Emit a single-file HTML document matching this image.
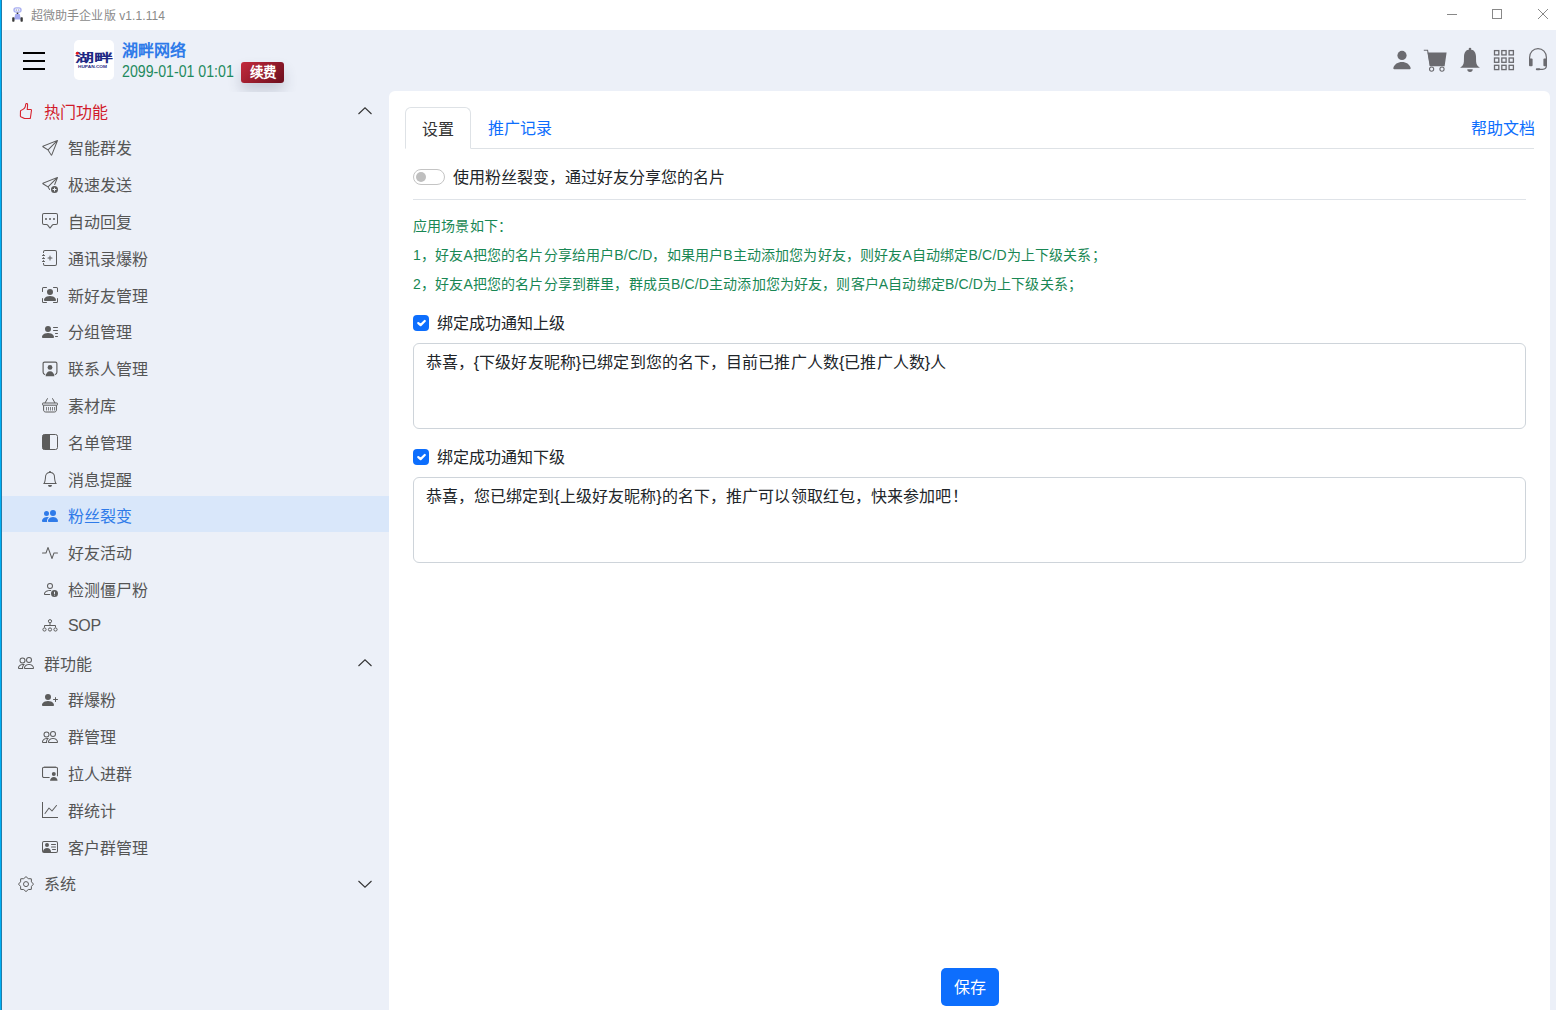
<!DOCTYPE html>
<html lang="zh-CN">
<head>
<meta charset="utf-8">
<style>
*{box-sizing:border-box;margin:0;padding:0}
html,body{width:1556px;height:1010px;overflow:hidden;background:#ecf0f8;font-family:"Liberation Sans",sans-serif;}
.abs{position:absolute}
#lb{position:absolute;left:0;top:0;width:3px;height:1010px;background:linear-gradient(90deg,#00b0f6 0,#00b0f6 1px,#217ca8 1px,#217ca8 2px,#f3f6fb 2px)}
#title{position:absolute;left:2px;top:0;width:1554px;height:30px;background:#fff}
#title .t{position:absolute;left:29px;top:1.5px;letter-spacing:.1px;line-height:29px;font-size:12px;color:#8a8a8a;white-space:nowrap}
#hdr{position:absolute;left:3px;top:30px;width:1553px;height:62px;background:#ecf0f8}
.ham{position:absolute;left:23px;width:22px;height:2px;background:#000}
#logo{position:absolute;left:74px;top:40px;width:40px;height:40px;background:#fff;border-radius:5px}
#name{position:absolute;left:122px;top:39px;font-size:16px;font-weight:bold;color:#2f7be9;line-height:24px;white-space:nowrap}
#date{position:absolute;left:122px;top:59.5px;font-size:16px;color:#1f8a5e;line-height:24px;white-space:nowrap;transform:scaleX(.885);transform-origin:0 0}
#badge{position:absolute;left:241px;top:62px;width:43px;height:21px;border-radius:3px;background:linear-gradient(135deg,#c42a3c,#6b0e1d);color:#fff;font-size:13.5px;font-weight:bold;line-height:20px;padding-top:1px;text-align:center;box-shadow:0 8px 14px rgba(50,60,90,.2)}
#side{position:absolute;left:2px;top:92px;width:387px;height:918px;background:#ecf0f8}
.mi{position:absolute;left:0;width:387px;height:36.8px;line-height:36.8px;font-size:16px;color:#555;white-space:nowrap}
.mi .tx{position:absolute;left:66px;top:2.5px}
.mi.h .tx{left:42px}
.mi svg{position:absolute}
.mi.sel{color:#2f7be9}
.selband{position:absolute;left:0;top:404px;width:387px;height:36px;background:#d9e7fa}
.mi.hot{color:#d11a2a}
#card{position:absolute;left:389px;top:91px;width:1161px;height:940px;background:#fff;border-radius:6px}
.tab{position:absolute;left:16px;top:16px;width:66px;height:42px;border:1px solid #dee2e6;border-bottom-color:#fff;border-radius:6px 6px 0 0;font-size:16px;line-height:24px;padding:9.5px 16px 6px;color:#333;background:#fff;z-index:2;white-space:nowrap}
.tabline{position:absolute;left:16px;top:57px;width:1129px;height:1px;background:#dee2e6}
.link{font-size:16px;line-height:24px;color:#0d6efd;white-space:nowrap}
.txt{font-size:16px;line-height:24px;color:#212529;white-space:nowrap}
.sw{position:absolute;left:24px;top:78px;width:32px;height:16px;border:1px solid #c4c4c4;border-radius:8px;background:#fff}
.sw span{position:absolute;left:2px;top:2px;width:10px;height:10px;border-radius:50%;background:#bfbfbf}
.hr{position:absolute;left:24px;width:1113px;height:1px;background:#dfe3e8}
.green{left:24px;font-size:14px;line-height:21px;color:#198754;white-space:nowrap;letter-spacing:.15px}
.cb{position:absolute;left:24px;width:16px;height:16px;border-radius:4px;background:#0d6efd}
.cb svg{position:absolute;left:0;top:0}
.ta{position:absolute;left:24px;width:1113px;height:86px;border:1px solid #ced4da;border-radius:6px;padding:6.8px 11.5px;font-size:16px;line-height:24px;color:#212529;white-space:nowrap;letter-spacing:.1px}
.btn{position:absolute;left:552px;top:877px;width:58px;height:38px;border-radius:5px;background:#0d6efd;color:#fff;font-size:16px;line-height:38px;padding-top:1px;text-align:center}
</style>
</head>
<body>
<div id="lb"></div>
<div id="title">
  <svg class="abs" style="left:10px;top:6.5px" width="11" height="15" viewBox="0 0 11 15">
    <rect x="1.3" y="0.2" width="8.4" height="5.6" rx="2.8" fill="#a9aff0"/>
    <rect x="2.8" y="1.6" width="5.4" height="2.8" rx="1.2" fill="#eceeff"/>
    <circle cx="4.3" cy="3" r=".6" fill="#777"/><circle cx="6.7" cy="3" r=".6" fill="#777"/>
    <rect x="4.7" y="5.6" width="1.6" height="1.6" fill="#333"/>
    <path d="M3.3 7 H7.7 L9 12.6 H2 Z" fill="#a3a9ef"/>
    <rect x="0.2" y="10.2" width="2.3" height="4.6" rx=".7" fill="#3a3a3a"/>
    <rect x="8.5" y="10.2" width="2.3" height="4.6" rx=".7" fill="#3a3a3a"/>
  </svg>
  <div class="t">超微助手企业版 v1.1.114</div>
  <svg class="abs" style="left:1445px;top:14px" width="10" height="2"><rect width="10" height="1" y="0" fill="#888"/></svg>
  <svg class="abs" style="left:1490px;top:9px" width="11" height="11"><rect x="0.5" y="0.5" width="9" height="9" fill="none" stroke="#888" stroke-width="1"/></svg>
  <svg class="abs" style="left:1536px;top:9px" width="11" height="11"><path d="M0 0 L10 10 M10 0 L0 10" stroke="#888" stroke-width="1"/></svg>
</div>
<div id="hdr"></div>
<div class="ham" style="top:52px"></div>
<div class="ham" style="top:60px"></div>
<div class="ham" style="top:68px"></div>
<svg class="abs" style="left:1380px;top:40px" width="176" height="40" viewBox="0 0 176 40">
 <g fill="#6b6b70">
  <circle cx="22" cy="15.4" r="4.6"/>
  <path d="M14.3 29.2 C13.5 29.2 13.1 28.6 13.4 27.8 C14.4 24.3 17.8 22 22 22 C26.2 22 29.6 24.3 30.6 27.8 C30.9 28.6 30.5 29.2 29.7 29.2 Z"/>
  <path d="M47.6 12.4 H66.6 L64.6 26.2 H50 Z"/>
  <path d="M43.8 10.3 H47.6 L50.2 26" fill="none" stroke="#6b6b70" stroke-width="1.05"/>
  <circle cx="51.6" cy="29.1" r="2.1" fill="none" stroke="#6b6b70" stroke-width="1.1"/>
  <circle cx="62" cy="29.1" r="2.1" fill="none" stroke="#6b6b70" stroke-width="1.1"/>
  <circle cx="90" cy="9" r="1.3"/>
  <path d="M90 9.5 C86.1 9.5 84.1 12.3 84 16.5 L83.9 21.5 C83.8 24.5 82.4 26.3 80.1 27.7 H99.9 C97.6 26.3 96.2 24.5 96.1 21.5 L96 16.5 C95.9 12.3 93.9 9.5 90 9.5Z"/>
  <path d="M87.3 29.2 A2.7 2.7 0 0 0 92.7 29.2 Z"/>
 </g>
 <g fill="none" stroke="#6b6b70" stroke-width="1.3">
  <rect x="114.5" y="10.6" width="4.3" height="4.3"/><rect x="121.8" y="10.6" width="4.3" height="4.3"/><rect x="129.1" y="10.6" width="4.3" height="4.3"/>
  <rect x="114.5" y="18" width="4.3" height="4.3"/><rect x="121.8" y="18" width="4.3" height="4.3"/><rect x="129.1" y="18" width="4.3" height="4.3"/>
  <rect x="114.5" y="25.3" width="4.3" height="4.3"/><rect x="121.8" y="25.3" width="4.3" height="4.3"/><rect x="129.1" y="25.3" width="4.3" height="4.3"/>
  <path d="M149.6 24 V17.5 C149.6 12.5 153.2 8.6 158 8.6 C162.8 8.6 166.4 12.5 166.4 17.5 V25.5 C166.4 27.8 165 29.3 162.5 29.3 H158.5" stroke-width="1.2"/>
 </g>
 <g fill="#6b6b70">
  <rect x="149" y="18.6" width="3.6" height="7.6" rx="1"/>
  <rect x="163.4" y="18.6" width="3.6" height="7.6" rx="1"/>
  <rect x="155.8" y="28.3" width="4.4" height="2" rx="1"/>
 </g>
</svg>
<div id="logo"><svg width="40" height="40" viewBox="0 0 40 40">
 <text x="1.5" y="23.9" font-family="Liberation Sans,sans-serif" font-weight="bold" font-size="17" fill="#1f2a85" textLength="37" lengthAdjust="spacingAndGlyphs" transform="translate(0,6) scale(1,0.67)">湖畔</text>
 <text x="4" y="28.4" font-family="Liberation Sans,sans-serif" font-weight="bold" font-size="4.3" fill="#1f2a85" textLength="29" lengthAdjust="spacingAndGlyphs">HUPAN.COM</text>
 <circle cx="3.3" cy="13.2" r="1.5" fill="#e81818"/>
</svg></div>
<div id="name">湖畔网络</div>
<div id="date">2099-01-01 01:01</div>
<div id="badge">续费</div>

<div id="side">
<div class="selband"></div>
<div class="mi h hot" style="top:0.0px"><svg style="left:16px;top:11px" width="16" height="16" viewBox="0 0 16 16"><path d="M8.6 0.5 C9.3 0.5 9.6 1 9.6 1.7 L9.3 6.4 L13 6.5 C13.4 6.6 13.5 6.9 13.5 7.3 L12.4 15 C12.3 15.4 12 15.6 11.6 15.6 L6.6 15.6 L2.8 13.8 C2.5 13.6 2.4 13.4 2.4 13 L2.5 8 C2.5 7.6 2.8 7.3 3.3 7.2 C5.2 6.6 7.3 5 7.6 2.2 L7.7 1.3 C7.8 0.8 8.1 0.5 8.6 0.5 Z" fill="none" stroke="#d8242f" stroke-width="1.1"/></svg><span class="tx">热门功能</span></div>
<div class="mi" style="top:36.8px"><svg style="left:40px;top:11px" width="16" height="16" viewBox="0 0 16 16"><path d="M15.854.146a.5.5 0 0 1 .11.54l-5.819 14.547a.75.75 0 0 1-1.329.124l-3.178-4.995L.643 7.184a.75.75 0 0 1 .124-1.33L15.314.037a.5.5 0 0 1 .54.11ZM6.636 10.07l2.761 4.338L14.13 2.576 6.636 10.07Zm6.787-8.201L1.591 6.602l4.339 2.76 7.494-7.493Z" fill="#5c5c5c"/></svg><span class="tx">智能群发</span></div>
<div class="mi" style="top:73.6px"><svg style="left:40px;top:11px" width="16" height="16" viewBox="0 0 16 16"><path d="M15.964.686a.5.5 0 0 0-.65-.65L.767 5.855a.75.75 0 0 0-.124 1.329l4.995 3.178 1.531 2.406a.5.5 0 0 0 .844-.536L6.637 10.07l7.494-7.494-1.895 4.738a.5.5 0 1 0 .928.372l2.8-7Zm-2.54 1.183L5.93 9.363 1.591 6.602l11.833-4.733Z" fill="#5c5c5c"/><path d="M16 12.5a3.5 3.5 0 1 1-7 0 3.5 3.5 0 0 1 7 0Zm-3.5-2a.5.5 0 0 0-.5.5v1h-1a.5.5 0 0 0 0 1h1v1a.5.5 0 0 0 1 0v-1h1a.5.5 0 0 0 0-1h-1v-1a.5.5 0 0 0-.5-.5Z" fill="#5c5c5c"/></svg><span class="tx">极速发送</span></div>
<div class="mi" style="top:110.4px"><svg style="left:40px;top:11px" width="16" height="16" viewBox="0 0 16 16"><path d="M14 1a1 1 0 0 1 1 1v8a1 1 0 0 1-1 1h-2.5a2 2 0 0 0-1.6.8L8 14.333 6.1 11.8a2 2 0 0 0-1.6-.8H2a1 1 0 0 1-1-1V2a1 1 0 0 1 1-1h12zM2 0a2 2 0 0 0-2 2v8a2 2 0 0 0 2 2h2.5a1 1 0 0 1 .8.4l1.9 2.533a1 1 0 0 0 1.6 0l1.9-2.533a1 1 0 0 1 .8-.4H14a2 2 0 0 0 2-2V2a2 2 0 0 0-2-2H2z" fill="#5c5c5c"/><path d="M5 6a1 1 0 1 1-2 0 1 1 0 0 1 2 0zm4 0a1 1 0 1 1-2 0 1 1 0 0 1 2 0zm4 0a1 1 0 1 1-2 0 1 1 0 0 1 2 0z" fill="#5c5c5c"/></svg><span class="tx">自动回复</span></div>
<div class="mi" style="top:147.2px"><svg style="left:40px;top:11px" width="16" height="16" viewBox="0 0 16 16"><path d="M8 5.5a.5.5 0 0 1 .5.5v1.5H10a.5.5 0 0 1 0 1H8.5V10a.5.5 0 0 1-1 0V8.5H6a.5.5 0 0 1 0-1h1.5V6a.5.5 0 0 1 .5-.5z" fill="#5c5c5c"/><path d="M3 0h10a2 2 0 0 1 2 2v12a2 2 0 0 1-2 2H3a2 2 0 0 1-2-2v-1h1v1a1 1 0 0 0 1 1h10a1 1 0 0 0 1-1V2a1 1 0 0 0-1-1H3a1 1 0 0 0-1 1v1H1V2a2 2 0 0 1 2-2z" fill="#5c5c5c"/><path d="M1 5v-.5a.5.5 0 0 1 1 0V5h.5a.5.5 0 0 1 0 1h-2a.5.5 0 0 1 0-1H1zm0 3v-.5a.5.5 0 0 1 1 0V8h.5a.5.5 0 0 1 0 1h-2a.5.5 0 0 1 0-1H1zm0 3v-.5a.5.5 0 0 1 1 0v.5h.5a.5.5 0 0 1 0 1h-2a.5.5 0 0 1 0-1H1z" fill="#5c5c5c"/></svg><span class="tx">通讯录爆粉</span></div>
<div class="mi" style="top:184.0px"><svg style="left:40px;top:11px" width="16" height="16" viewBox="0 0 16 16"><path d="M1.5 1a.5.5 0 0 0-.5.5v3a.5.5 0 0 1-1 0v-3A1.5 1.5 0 0 1 1.5 0h3a.5.5 0 0 1 0 1h-3zM11 .5a.5.5 0 0 1 .5-.5h3A1.5 1.5 0 0 1 16 1.5v3a.5.5 0 0 1-1 0v-3a.5.5 0 0 0-.5-.5h-3a.5.5 0 0 1-.5-.5zM.5 11a.5.5 0 0 1 .5.5v3a.5.5 0 0 0 .5.5h3a.5.5 0 0 1 0 1h-3A1.5 1.5 0 0 1 0 14.5v-3a.5.5 0 0 1 .5-.5zm15 0a.5.5 0 0 1 .5.5v3a1.5 1.5 0 0 1-1.5 1.5h-3a.5.5 0 0 1 0-1h3a.5.5 0 0 0 .5-.5v-3a.5.5 0 0 1 .5-.5z" fill="#5c5c5c"/><path d="M3 14s-1 0-1-1 1-4 6-4 6 3 6 4-1 1-1 1H3zm8-9a3 3 0 1 1-6 0 3 3 0 0 1 6 0z" fill="#5c5c5c"/></svg><span class="tx">新好友管理</span></div>
<div class="mi" style="top:220.8px"><svg style="left:40px;top:11px" width="16" height="16" viewBox="0 0 16 16"><path d="M6 8a3 3 0 1 0 0-6 3 3 0 0 0 0 6zm-5 6s-1 0-1-1 1-4 6-4 6 3 6 4-1 1-1 1H1zM11 3.5a.5.5 0 0 1 .5-.5h4a.5.5 0 0 1 0 1h-4a.5.5 0 0 1-.5-.5zm.5 2.5a.5.5 0 0 0 0 1h4a.5.5 0 0 0 0-1h-4zm2 3a.5.5 0 0 0 0 1h2a.5.5 0 0 0 0-1h-2zm0 3a.5.5 0 0 0 0 1h2a.5.5 0 0 0 0-1h-2z" fill="#5c5c5c"/></svg><span class="tx">分组管理</span></div>
<div class="mi" style="top:257.6px"><svg style="left:40px;top:11px" width="16" height="16" viewBox="0 0 16 16"><path d="M3.2 13.6 C1.9 13.4 1.1 12.5 1.1 11.2 V2.6 C1.1 1.6 1.6 1.1 2.6 1.1 H13.4 C14.4 1.1 14.9 1.6 14.9 2.6 V11.2 C14.9 12.5 14.1 13.4 12.8 13.6" fill="none" stroke="#5c5c5c" stroke-width="1.15"/><circle cx="8" cy="6.4" r="2.4" fill="#5c5c5c"/><path d="M3.6 15.2 C3.8 12.2 5.5 10.2 8 10.2 C10.5 10.2 12.2 12.2 12.4 15.2 Z" fill="#5c5c5c"/></svg><span class="tx">联系人管理</span></div>
<div class="mi" style="top:294.4px"><svg style="left:40px;top:11px" width="16" height="16" viewBox="0 0 16 16"><path d="M5.6 1.3 L3 6 M10.4 1.3 L13 6" fill="none" stroke="#5c5c5c" stroke-width="1"/><rect x="0.5" y="6" width="15" height="2.2" rx=".6" fill="none" stroke="#5c5c5c" stroke-width="1"/><path d="M1.6 8.4 V13 C1.6 14.2 2.4 15 3.6 15 H12.4 C13.6 15 14.4 14.2 14.4 13 V8.4" fill="none" stroke="#5c5c5c" stroke-width="1"/><path d="M4 10 V13.5 H5 V10 Z M6 10 V13.5 H7 V10 Z M8 10 V13.5 H9 V10 Z M10 10 V13.5 H11 V10 Z M12 10 V13.5 H13 V10 Z" fill="#5c5c5c" opacity=".75"/></svg><span class="tx">素材库</span></div>
<div class="mi" style="top:331.2px"><svg style="left:40px;top:11px" width="16" height="16" viewBox="0 0 16 16"><rect x="0.5" y="0.5" width="15" height="15" rx="2" fill="none" stroke="#5c5c5c" stroke-width="1"/><path d="M2 0.5 H8 V15.5 H2 A1.5 1.5 0 0 1 0.5 14 V2 A1.5 1.5 0 0 1 2 0.5Z" fill="#5c5c5c"/></svg><span class="tx">名单管理</span></div>
<div class="mi" style="top:368.0px"><svg style="left:40px;top:11px" width="16" height="16" viewBox="0 0 16 16"><path d="M8 16a2 2 0 0 0 2-2H6a2 2 0 0 0 2 2zM8 1.918l-.797.161A4.002 4.002 0 0 0 4 6c0 .628-.134 2.197-.459 3.742-.16.767-.376 1.566-.663 2.258h10.244c-.287-.692-.502-1.49-.663-2.258C12.134 8.197 12 6.628 12 6a4.002 4.002 0 0 0-3.203-3.92L8 1.917zM14.22 12c.223.447.481.801.78 1H1c.299-.199.557-.553.78-1C2.68 10.2 3 6.88 3 6c0-2.420 1.72-4.44 4.005-4.901a1 1 0 1 1 1.990 0A5.002 5.002 0 0 1 13 6c0 .88.32 4.2 1.22 6z" fill="#5c5c5c"/></svg><span class="tx">消息提醒</span></div>
<div class="mi sel" style="top:404.8px"><svg style="left:40px;top:11px" width="16" height="16" viewBox="0 0 16 16"><path d="M7 14s-1 0-1-1 1-4 5-4 5 3 5 4-1 1-1 1H7Zm4-6a3 3 0 1 0 0-6 3 3 0 0 0 0 6Zm-5.784 6A2.238 2.238 0 0 1 5 13c0-1.355.68-2.75 1.936-3.72A6.325 6.325 0 0 0 5 9c-4 0-5 3-5 4s1 1 1 1h4.216ZM4.5 8a2.5 2.5 0 1 0 0-5 2.5 2.5 0 0 0 0 5Z" fill="#2f7be9"/></svg><span class="tx">粉丝裂变</span></div>
<div class="mi" style="top:441.6px"><svg style="left:40px;top:11px" width="16" height="16" viewBox="0 0 16 16"><path d="M6 2a.5.5 0 0 1 .47.33L10 12.036l1.53-4.208A.5.5 0 0 1 12 7.5h3.5a.5.5 0 0 1 0 1h-3.15l-1.88 5.17a.5.5 0 0 1-.94 0L6 3.964 4.470 8.171A.5.5 0 0 1 4 8.5H.5a.5.5 0 0 1 0-1h3.15l1.88-5.170A.5.5 0 0 1 6 2Z" fill="#5c5c5c"/></svg><span class="tx">好友活动</span></div>
<div class="mi" style="top:478.4px"><svg style="left:40px;top:11px" width="16" height="16" viewBox="0 0 16 16"><path d="M11 5a3 3 0 1 1-6 0 3 3 0 0 1 6 0ZM8 7a2 2 0 1 0 0-4 2 2 0 0 0 0 4Zm.256 7a4.474 4.474 0 0 1-.229-1.004H3c.001-.246.154-.986.832-1.664C4.484 10.68 5.711 10 8 10c.26 0 .507.009.74.025.226-.341.496-.65.804-.918C9.077 9.038 8.564 9 8 9c-5 0-6 3-6 4s1 1 1 1h5.256Z" fill="#5c5c5c"/><path d="M16 12.5a3.5 3.5 0 1 1-7 0 3.5 3.5 0 0 1 7 0Zm-3.5-2a.5.5 0 0 0-.5.5v1.5a.5.5 0 0 0 1 0V11a.5.5 0 0 0-.5-.5Zm0 4a.5.5 0 1 0 0-1 .5.5 0 0 0 0 1Z" fill="#5c5c5c"/></svg><span class="tx">检测僵尸粉</span></div>
<div class="mi" style="top:515.2px"><svg style="left:40px;top:11px" width="16" height="16" viewBox="0 0 16 16"><circle cx="8" cy="3.2" r="1.6" fill="none" stroke="#5c5c5c" stroke-width="1"/><path d="M8 4.8V7.5 M2.5 9.5 V7.5 H13.5 V9.5" fill="none" stroke="#5c5c5c" stroke-width="1"/><circle cx="2.5" cy="11.5" r="1.6" fill="none" stroke="#5c5c5c" stroke-width="1"/><circle cx="8" cy="11.5" r="1.6" fill="none" stroke="#5c5c5c" stroke-width="1"/><circle cx="13.5" cy="11.5" r="1.6" fill="none" stroke="#5c5c5c" stroke-width="1"/></svg><span class="tx" style="top:1px;font-size:16px;letter-spacing:-.3px">SOP</span></div>
<div class="mi h" style="top:552.0px"><svg style="left:16px;top:11px" width="16" height="16" viewBox="0 0 16 16"><path d="M15 14s1 0 1-1-1-4-5-4-5 3-5 4 1 1 1 1h8Zm-7.978-1A.261.261 0 0 1 7 12.996c.001-.264.167-1.03.76-1.72C8.312 10.629 9.282 10 11 10c1.717 0 2.687.63 3.24 1.276.593.69.758 1.457.76 1.72l-.008.002a.274.274 0 0 1-.014.002H7.022ZM11 7a2 2 0 1 0 0-4 2 2 0 0 0 0 4Zm3-2a3 3 0 1 1-6 0 3 3 0 0 1 6 0ZM6.936 9.28a5.88 5.88 0 0 0-1.23-.247A7.35 7.35 0 0 0 5 9c-4 0-5 3-5 4 0 .667.333 1 1 1h4.216A2.238 2.238 0 0 1 5 13c0-1.01.377-2.042 1.09-2.904.243-.294.526-.569.846-.816ZM4.92 10A5.493 5.493 0 0 0 4 13H1c0-.26.164-1.03.76-1.724.545-.636 1.492-1.256 3.160-1.275ZM1.5 5.5a3 3 0 1 1 6 0 3 3 0 0 1-6 0Zm3-2a2 2 0 1 0 0 4 2 2 0 0 0 0-4Z" fill="#5c5c5c"/></svg><span class="tx">群功能</span></div>
<div class="mi" style="top:588.8px"><svg style="left:40px;top:11px" width="16" height="16" viewBox="0 0 16 16"><path d="M1 14s-1 0-1-1 1-4 6-4 6 3 6 4-1 1-1 1H1zm5-6a3 3 0 1 0 0-6 3 3 0 0 0 0 6z" fill="#5c5c5c"/><path d="M13.5 5a.5.5 0 0 1 .5.5V7h1.5a.5.5 0 0 1 0 1H14v1.5a.5.5 0 0 1-1 0V8h-1.5a.5.5 0 0 1 0-1H13V5.5a.5.5 0 0 1 .5-.5z" fill="#5c5c5c"/></svg><span class="tx">群爆粉</span></div>
<div class="mi" style="top:625.6px"><svg style="left:40px;top:11px" width="16" height="16" viewBox="0 0 16 16"><path d="M15 14s1 0 1-1-1-4-5-4-5 3-5 4 1 1 1 1h8Zm-7.978-1A.261.261 0 0 1 7 12.996c.001-.264.167-1.03.76-1.72C8.312 10.629 9.282 10 11 10c1.717 0 2.687.63 3.24 1.276.593.69.758 1.457.76 1.72l-.008.002a.274.274 0 0 1-.014.002H7.022ZM11 7a2 2 0 1 0 0-4 2 2 0 0 0 0 4Zm3-2a3 3 0 1 1-6 0 3 3 0 0 1 6 0ZM6.936 9.28a5.88 5.88 0 0 0-1.23-.247A7.35 7.35 0 0 0 5 9c-4 0-5 3-5 4 0 .667.333 1 1 1h4.216A2.238 2.238 0 0 1 5 13c0-1.01.377-2.042 1.09-2.904.243-.294.526-.569.846-.816ZM4.92 10A5.493 5.493 0 0 0 4 13H1c0-.26.164-1.03.76-1.724.545-.636 1.492-1.256 3.160-1.275ZM1.5 5.5a3 3 0 1 1 6 0 3 3 0 0 1-6 0Zm3-2a2 2 0 1 0 0 4 2 2 0 0 0 0-4Z" fill="#5c5c5c"/></svg><span class="tx">群管理</span></div>
<div class="mi" style="top:662.4px"><svg style="left:40px;top:11px" width="16" height="16" viewBox="0 0 16 16"><path d="M2 2.2 H14 A1.5 1.5 0 0 1 15.5 3.7 V11.3" fill="none" stroke="#5c5c5c" stroke-width="1.1"/><path d="M14 2.2 H2 A1.5 1.5 0 0 0 0.5 3.7 V11 A1.5 1.5 0 0 0 2 12.5 H7.6" fill="none" stroke="#5c5c5c" stroke-width="1.1"/><circle cx="11.8" cy="9.1" r="2" fill="#5c5c5c"/><path d="M8 15.7 C8.2 13.3 9.8 11.9 11.8 11.9 C13.8 11.9 15.4 13.3 15.6 15.7 Z" fill="#5c5c5c"/></svg><span class="tx">拉人进群</span></div>
<div class="mi" style="top:699.2px"><svg style="left:40px;top:11px" width="16" height="16" viewBox="0 0 16 16"><path d="M0 0h1v15h15v1H0V0Zm14.817 3.113a.5.5 0 0 1 .07.704l-4.5 5.5a.5.5 0 0 1-.74.037L7.06 6.767l-3.656 5.027a.5.5 0 0 1-.808-.588l4-5.5a.5.5 0 0 1 .758-.06l2.609 2.61 4.15-5.073a.5.5 0 0 1 .704-.07Z" fill="#5c5c5c"/></svg><span class="tx">群统计</span></div>
<div class="mi" style="top:736.0px"><svg style="left:40px;top:11px" width="16" height="16" viewBox="0 0 16 16"><path d="M5 8a2 2 0 1 0 0-4 2 2 0 0 0 0 4Zm4-2.5a.5.5 0 0 1 .5-.5h4a.5.5 0 0 1 0 1h-4a.5.5 0 0 1-.5-.5ZM9 8a.5.5 0 0 1 .5-.5h4a.5.5 0 0 1 0 1h-4A.5.5 0 0 1 9 8Zm1 2.5a.5.5 0 0 1 .5-.5h3a.5.5 0 0 1 0 1h-3a.5.5 0 0 1-.5-.5Z" fill="#5c5c5c"/><path d="M2 2a2 2 0 0 0-2 2v8a2 2 0 0 0 2 2h12a2 2 0 0 0 2-2V4a2 2 0 0 0-2-2H2ZM1 4a1 1 0 0 1 1-1h12a1 1 0 0 1 1 1v8a1 1 0 0 1-1 1H8.96c.026-.163.04-.33.04-.5C9 10.567 7.21 9 5 9c-2.086 0-3.8 1.398-3.984 3.181A1.006 1.006 0 0 1 1 12V4Z" fill="#5c5c5c"/></svg><span class="tx">客户群管理</span></div>
<div class="mi h" style="top:772.8px"><svg style="left:16px;top:11px" width="16" height="16" viewBox="0 0 16 16"><path d="M8.00 0.60 L10.26 2.65 L13.30 2.80 L13.45 5.84 L15.50 8.10 L13.45 10.36 L13.30 13.40 L10.26 13.55 L8.00 15.60 L5.74 13.55 L2.70 13.40 L2.55 10.36 L0.50 8.10 L2.55 5.84 L2.70 2.80 L5.74 2.65 Z" fill="none" stroke="#5c5c5c" stroke-width="1" stroke-linejoin="round"/><circle cx="8" cy="8.1" r="2.5" fill="none" stroke="#5c5c5c" stroke-width="1"/></svg><span class="tx">系统</span></div>
<svg class="abs" style="left:355px;top:13.5px" width="16" height="10" viewBox="0 0 16 10"><path d="M1.5 8 L8 1.8 L14.5 8" fill="none" stroke="#333" stroke-width="1.1"/></svg>
<svg class="abs" style="left:355px;top:565.5px" width="16" height="10" viewBox="0 0 16 10"><path d="M1.5 8 L8 1.8 L14.5 8" fill="none" stroke="#333" stroke-width="1.1"/></svg>
<svg class="abs" style="left:355px;top:787px" width="16" height="10" viewBox="0 0 16 10"><path d="M1.5 2 L8 8.2 L14.5 2" fill="none" stroke="#333" stroke-width="1.1"/></svg>
</div>
<div id="card">
  <div class="tab act">设置</div>
  <div class="tabline"></div>
  <div class="abs link" style="left:99px;top:26px">推广记录</div>
  <div class="abs link" style="left:1081.5px;top:26px">帮助文档</div>
  <div class="sw"><span></span></div>
  <div class="abs txt" style="left:64px;top:75.2px">使用粉丝裂变，通过好友分享您的名片</div>
  <div class="hr" style="top:108px"></div>
  <div class="abs green" style="top:124.7px">应用场景如下：</div>
  <div class="abs green" style="top:153.7px">1，好友A把您的名片分享给用户B/C/D，如果用户B主动添加您为好友，则好友A自动绑定B/C/D为上下级关系；</div>
  <div class="abs green" style="top:182.7px">2，好友A把您的名片分享到群里，群成员B/C/D主动添加您为好友，则客户A自动绑定B/C/D为上下级关系；</div>
  <div class="cb" style="top:224px"><svg width="16" height="16" viewBox="0 0 20 20"><path fill="none" stroke="#fff" stroke-linecap="round" stroke-linejoin="round" stroke-width="2.8" d="m6.6 10.1 2.9 2.6 5.2-5.2"/></svg></div>
  <div class="abs txt" style="left:48px;top:220.8px">绑定成功通知上级</div>
  <div class="ta" style="top:252px">恭喜，{下级好友昵称}已绑定到您的名下，目前已推广人数{已推广人数}人</div>
  <div class="cb" style="top:358px"><svg width="16" height="16" viewBox="0 0 20 20"><path fill="none" stroke="#fff" stroke-linecap="round" stroke-linejoin="round" stroke-width="2.8" d="m6.6 10.1 2.9 2.6 5.2-5.2"/></svg></div>
  <div class="abs txt" style="left:48px;top:354.8px">绑定成功通知下级</div>
  <div class="ta" style="top:386px">恭喜，您已绑定到{上级好友昵称}的名下，推广可以领取红包，快来参加吧！</div>
  <div class="btn">保存</div>
</div>
</body>
</html>
